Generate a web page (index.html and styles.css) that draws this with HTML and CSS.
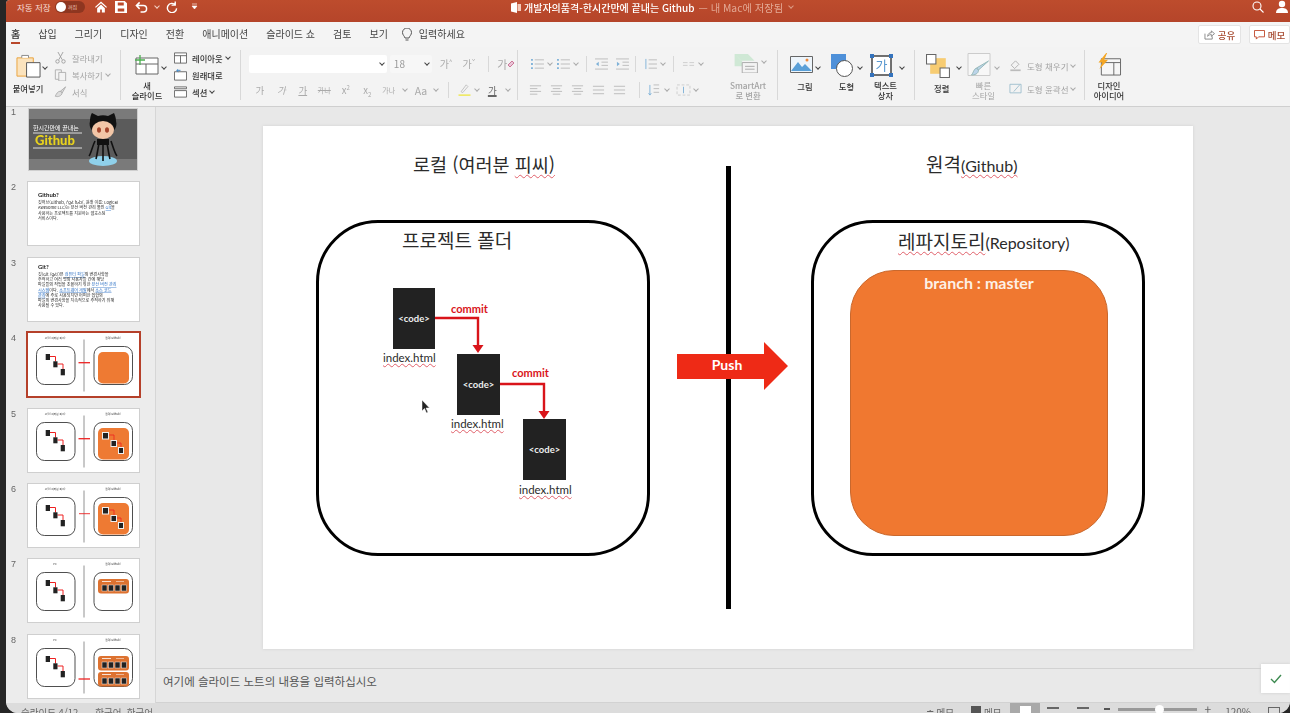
FILE: index.html
```html
<!doctype html>
<html lang="ko">

<head>
	<meta charset="utf-8" />
	<title>개발자의품격-한시간만에 끝내는 Github</title>
	<link rel="stylesheet" href="styles.css">
</head>

<body>

	<svg class="defs" xmlns="http://www.w3.org/2000/svg">
		<symbol id="lines" viewBox="0 0 14 12"><path d="M1 2h12M1 6h12M1 10h12" fill="none" stroke="currentColor"/></symbol>
		<symbol id="linesc" viewBox="0 0 14 12"><path d="M1 1.5h12M3 4.5h8M1 7.5h12M3 10.5h8" fill="none" stroke="currentColor"/></symbol>
		<symbol id="linesl" viewBox="0 0 14 12"><path d="M1 1.5h12M1 4.5h8M1 7.5h12M1 10.5h8" fill="none" stroke="currentColor"/></symbol>
		<symbol id="bullets" viewBox="0 0 16 13"><path d="M5 2h10M5 6.5h10M5 11h10" fill="none" stroke="currentColor"/><path d="M1 1h2v2H1zM1 5.5h2v2H1zM1 10h2v2H1z" fill="#7fb2d8"/></symbol>
		<symbol id="mini" viewBox="0 0 111 63">
			<rect x="8.5" y="13.5" width="38.5" height="38" rx="8" fill="#fff" stroke="#222" stroke-width=".8"/>
			<rect x="66" y="13.5" width="38.5" height="38" rx="8" fill="#fff" stroke="#222" stroke-width=".8"/>
			<path d="M56 6.5v52" stroke="#777" stroke-width=".8"/>
			<path d="M22 23.5h5.500v5M29.5 31h5.500v5" fill="none" stroke="#e22" stroke-width="1"/>
			<rect x="17.7" y="21" width="4.3" height="6" fill="#222"/>
			<rect x="25.3" y="28.3" width="4.2" height="6" fill="#222"/>
			<rect x="32.7" y="36" width="4.2" height="6.3" fill="#222"/>
		</symbol>
		<symbol id="docs-orange" viewBox="0 0 111 63">
			<rect x="70" y="19" width="31" height="31.5" rx="5" fill="#ee7a33"/>
			<path d="M81 26h5v5M89 34h4v4" fill="none" stroke="#e22" stroke-width=".8"/>
			<rect x="74.5" y="23.5" width="6" height="6.5" fill="#222" stroke="#eee"/>
			<rect x="83" y="31.5" width="5.5" height="6" fill="#222" stroke="#eee"/>
			<rect x="90.5" y="38.5" width="5" height="6" fill="#222" stroke="#eee"/>
		</symbol>
		<symbol id="branch-bar" viewBox="0 0 111 15">
			<rect x="70" y="0" width="31" height="14.5" rx="3" fill="#dd7230"/>
			<path d="M74 2.5h9" stroke="#fff" stroke-width=".8"/>
			<path d="M88 2.5h8" stroke="#fff" stroke-width=".5"/>
			<rect x="74" y="6" width="5" height="6" fill="#222" stroke="#eee" stroke-width=".5"/>
			<rect x="80.5" y="6" width="5" height="6" fill="#222" stroke="#eee" stroke-width=".5"/>
			<rect x="87" y="6" width="5" height="6" fill="#222" stroke="#eee" stroke-width=".5"/>
			<rect x="93.5" y="6" width="5" height="6" fill="#222" stroke="#eee" stroke-width=".5"/>
		</symbol>
	</svg>

	<div class="window">

		<!-- title bar -->
		<header class="titlebar">
			<div class="qat">
				<span class="autosave">자동 저장</span>
				<span class="toggle"><i></i><b>꺼짐</b></span>
				<svg class="qat-ic" viewBox="0 0 14 13"><path d="M7 0 0 6.5l1 1L7 2l6 5.500 1-1zM2.5 8v5h3.500V9.500h2V13h3.500V8L7 3.700z" fill="#fff"/></svg>
				<svg class="qat-ic" viewBox="0 0 13 13"><path d="M0 0h10.500L13 2.500V13H0zM3 1.500v3.500h6.500V1.500zM3 8v3.500h7V8z" fill="#fff" fill-rule="evenodd"/></svg>
				<svg class="qat-ic wide" viewBox="0 0 14 12"><path d="M5 1 1.500 4.500 5 8M2 4.500h7a3.500 3.500 0 0 1 0 7H6" fill="none" stroke="#fff" stroke-width="1.600"/></svg>
				<i class="chev light"></i>
				<svg class="qat-ic redo" viewBox="0 0 13 13"><path d="M10 .5v4H6M10 4A5 5 0 1 0 11.500 8" fill="none" stroke="#fff" stroke-width="1.500"/></svg>
				<svg class="qat-ic drop" viewBox="0 0 7 7"><path d="M1 1h5M1 3h5l-2.500 3z" fill="#fff" stroke="#fff" stroke-width=".6"/></svg>
			</div>
			<div class="doc-title">
				<svg class="ppt" viewBox="0 0 10 11"><path d="M0 1.500 6 0v11L0 9.500z" fill="#fff"/><path d="M6.500 2H10v7H6.500z" fill="#f3c9b8"/></svg>
				<span class="doc-name">개발자의품격-한시간만에 끝내는 Github</span>
				<span class="doc-saved">— 내 Mac에 저장됨</span>
				<i class="chev faint"></i>
			</div>
			<div class="win-right">
				<svg class="search" viewBox="0 0 12 12"><circle cx="5" cy="5" r="4" fill="none" stroke="#fff" stroke-width="1.100"/><path d="m8 8 3.500 3.500" stroke="#fff" stroke-width="1.100"/></svg>
				<svg class="person" viewBox="0 0 12 14"><circle cx="6" cy="4" r="3.200" fill="#fff"/><path d="M0 13c0-4 3-5 6-5s6 1 6 5z" fill="#fff"/></svg>
			</div>
		</header>

		<!-- tabs -->
		<nav class="tabs">
			<a class="tab active">홈</a>
			<a class="tab">삽입</a>
			<a class="tab">그리기</a>
			<a class="tab">디자인</a>
			<a class="tab">전환</a>
			<a class="tab">애니메이션</a>
			<a class="tab">슬라이드 쇼</a>
			<a class="tab">검토</a>
			<a class="tab">보기</a>
			<svg class="bulb" viewBox="0 0 10 14"><path d="M3 10C2.500 8 .5 7 .5 4.500a4.500 4.500 0 0 1 9 0C9.500 7 7.500 8 7 10zM3.500 12h3" fill="none" stroke="#555"/></svg>
			<a class="tab search-tab">입력하세요</a>
			<div class="tab-actions">
				<button class="pill share"><svg viewBox="0 0 12 11"><path d="M1 4v6h8V7M4 7c0-3 2-4 4-4V1l3.500 3L8 7V5C6.500 5 5 5.500 4 7z" fill="none" stroke="#777" stroke-width=".9"/></svg>공유</button>
				<button class="pill memo"><svg viewBox="0 0 12 11"><path d="M.5.500h11v7H5L2.500 10V7.500h-2z" fill="none" stroke="#c0492c"/></svg>메모</button>
			</div>
		</nav>

		<!-- ribbon -->
		<section class="ribbon">

			<div class="group g-clip">
				<div class="big w-paste">
					<svg class="ic-26" viewBox="0 0 26 26"><path d="M1 4h17v19H1z" fill="#fbe3bd" stroke="#e9a23b"/><path d="M6 4V1.500h7V4" fill="#fff" stroke="#888"/><path d="M11 9h14v15H11z" fill="#fff" stroke="#555"/></svg>
					<span class="label">붙여넣기</span>
				</div>
				<i class="chev first"></i>
				<div class="list off">
					<div class="li"><svg class="ic-14" viewBox="0 0 14 14"><path d="M4 0l5 9M10 0 5 9" stroke="#999" fill="none"/><circle cx="3.500" cy="11" r="2" fill="none" stroke="#999"/><circle cx="10.500" cy="11" r="2" fill="none" stroke="#999"/></svg>잘라내기</div>
					<div class="li"><svg class="ic-14" viewBox="0 0 14 14"><path d="M1 1h7v11H1z" fill="none" stroke="#aaa"/><path d="M5 4h8v10H5z" fill="#f3f3f3" stroke="#aaa"/></svg>복사하기 <i class="chev faint2"></i></div>
					<div class="li"><svg class="ic-14" viewBox="0 0 14 14"><path d="M13 1 7 6 9 8zM7 6c-3 0-5 3-6 6 3 1 7 0 8-4z" fill="#ddd" stroke="#aaa"/></svg>서식</div>
				</div>
			</div>

			<div class="group g-slides">
				<div class="big w-new">
					<svg class="ic-new" viewBox="0 0 24 20"><path d="M1 3h22v16H1zM1 9h22M11 9v10" fill="#fff" stroke="#666"/><path d="M5 0v10M0 5h10" stroke="#4caf50" stroke-width="1.300"/></svg>
					<span class="label">새<br>슬라이드</span>
				</div>
				<i class="chev"></i>
				<div class="list">
					<div class="li"><svg class="ic-14" viewBox="0 0 14 12"><path d="M.5.500h13v11H.5zM.5 3.500h13M7 3.500v8" fill="#fff" stroke="#666"/></svg>레이아웃 <i class="chev"></i></div>
					<div class="li"><svg class="ic-14" viewBox="0 0 14 12"><path d="M.5 2.500h13v9H.5z" fill="#fff" stroke="#666"/><path d="M7 1H3M4.500 0 3 1l1.500 2" stroke="#3d85c6" fill="none"/></svg>원래대로</div>
					<div class="li"><svg class="ic-14" viewBox="0 0 14 12"><path d="M.5.500h13v2H.5zM.5 4.500h13v7H.5z" fill="#fff" stroke="#666"/></svg>섹션 <i class="chev"></i></div>
				</div>
			</div>

			<div class="group g-font">
				<div class="row row-a">
					<div class="field f-name"><i class="chev"></i></div>
					<div class="field f-size">18<i class="chev"></i></div>
					<span class="cell off-t up">가<sup>^</sup></span>
					<span class="cell off-t up">가<sup>ˇ</sup></span>
					<span class="vsep"></span>
					<span class="cell off-t erase">가<svg viewBox="0 0 8 8"><path d="m1 5 4-4 2 2-4 4z" fill="#e9c6d8" stroke="#c79"/></svg></span>
				</div>
				<div class="row row-b off-t">
					<span class="cell">가</span>
					<span class="cell ital">가</span>
					<span class="cell under">가</span>
					<span class="cell strike">가나</span>
					<span class="cell">x<sup>2</sup></span>
					<span class="cell">x<sub>2</sub></span>
					<span class="cell tiny">가나</span>
					<i class="chev"></i>
					<span class="cell aa">Aa</span>
					<i class="chev"></i>
					<span class="vsep"></span>
					<svg class="ic-16 hl" viewBox="0 0 16 14"><path d="m4 9 6-8 2 2-6 7z" fill="none" stroke="#bbb"/><path d="M1 12h14v2H1z" fill="#efe96a"/></svg>
					<i class="chev"></i>
					<span class="cell color">가</span>
					<i class="chev"></i>
				</div>
			</div>

			<div class="group g-para">
				<div class="para-main">
					<div class="row row-a">
						<svg class="ic-16" viewBox="0 0 16 13"><use href="#bullets"/></svg><i class="chev"></i>
						<svg class="ic-16" viewBox="0 0 16 13"><use href="#bullets"/></svg><i class="chev"></i>
						<span class="vsep"></span>
						<svg class="ic-16" viewBox="0 0 16 13"><path d="M1 1h14M8 4.500h7M8 8h7M1 12h14" stroke="#bbb" fill="none"/><path d="M5 4 2 6.500 5 9z" fill="#7fb2d8"/></svg>
						<svg class="ic-16" viewBox="0 0 16 13"><path d="M1 1h14M8 4.500h7M8 8h7M1 12h14" stroke="#bbb" fill="none"/><path d="M2 4l3 2.500L2 9z" fill="#7fb2d8"/></svg>
						<span class="vsep"></span>
						<svg class="ic-16" viewBox="0 0 16 13"><path d="M6 2h9M6 6.500h9M6 11h9" stroke="#bbb" fill="none"/><path d="M3 1v11" stroke="#7fb2d8"/></svg><i class="chev"></i>
						<span class="vsep"></span>
						<svg class="ic-16" viewBox="0 0 16 13"><path d="M2 5h5M2 8h5M9 5h5M9 8h5" stroke="#ccc" fill="none"/></svg><i class="chev"></i>
					</div>
					<div class="row row-b">
						<svg class="ic-14 al" viewBox="0 0 14 12"><use href="#linesl"/></svg>
						<svg class="ic-14 al" viewBox="0 0 14 12"><use href="#linesc"/></svg>
						<svg class="ic-14 al" viewBox="0 0 14 12"><use href="#linesc"/></svg>
						<svg class="ic-14 al" viewBox="0 0 14 12"><use href="#lines"/></svg>
						<svg class="ic-14 al" viewBox="0 0 14 12"><use href="#lines"/></svg>
						<span class="vsep"></span>
						<svg class="ic-16" viewBox="0 0 16 13"><path d="M3 1v11M1.500 10 3 12l1.500-2" stroke="#7fb2d8" fill="none"/><path d="M7 1h6M7 5h6M13 9H7" stroke="#bbb" fill="none"/></svg><i class="chev"></i>
						<svg class="ic-16 gap-l" viewBox="0 0 16 13"><path d="M1 1h14v11H1z" fill="none" stroke="#ccc" stroke-dasharray="3 2"/><path d="M8 3v7" stroke="#7fb2d8"/></svg><i class="chev"></i>
					</div>
				</div>
				<div class="big w-smart off">
					<svg class="ic-smart" viewBox="0 0 25 20"><path d="M0 0h14l7 7H7zM0 13h8V8L0 0z" fill="#cfe8d5"/><path d="M8 9h16v11H8z" fill="#f3f3f3" stroke="#aaa"/><path d="M11 13h10M11 16h10" stroke="#aaa"/></svg>
					<i class="chev abs-chev"></i>
					<span class="label">SmartArt<br>로 변환</span>
				</div>
			</div>

			<div class="group g-insert">
				<div class="big w-pic">
					<svg class="ic-pic" viewBox="0 0 23 17"><path d="M.5.500h22v16H.5z" fill="#eef5fb" stroke="#666"/><path d="M1 15 8 6l4 5 3-3 7 7z" fill="#5aa0d8"/><circle cx="17" cy="4" r="1.500" fill="#ef8a3c"/></svg>
					<span class="label">그림</span>
				</div>
				<i class="chev mid"></i>
				<div class="big w-shape">
					<svg class="ic-shape" viewBox="0 0 25 25"><path d="M1 1h15v15H1z" fill="#4e90d9"/><circle cx="14.500" cy="15.500" r="8" fill="#fff" stroke="#555"/></svg>
					<span class="label">도형</span>
				</div>
				<i class="chev mid"></i>
				<div class="big w-text">
					<svg class="ic-textbox" viewBox="0 0 25 25"><path d="M3 3h19v19H3z" fill="#fff" stroke="#444" stroke-width="1.500"/><path d="M1 1h4v4H1zM20 1h4v4h-4zM1 20h4v4H1zM20 20h4v4h-4z" fill="#3473bd"/><text x="12.500" y="17" text-anchor="middle" class="tb-glyph">가</text></svg>
					<span class="label">텍스트<br>상자</span>
				</div>
				<i class="chev mid"></i>
			</div>

			<div class="group g-draw">
				<div class="big w-arrange">
					<svg class="ic-26" viewBox="0 0 24 24"><path d="M4 4h15v15H4z" fill="#f7cc72"/><path d="M.5.500h9v9h-9zM13.500 13.500h9v9h-9z" fill="#fff" stroke="#666"/></svg>
					<span class="label">정렬</span>
				</div>
				<i class="chev mid"></i>
				<div class="big w-quick off">
					<svg class="ic-26" viewBox="0 0 24 24"><path d="M.5.500h22v22H.500z" fill="#f7f7f7" stroke="#ccc"/><path d="m21 8-10 9-2-2zM9 15c-3 1-3 5-5 7 3 0 7-1 7-5z" fill="#bcd4ea" stroke="#9bb"/></svg>
					<span class="label">빠른<br>스타일</span>
				</div>
				<i class="chev mid faint2"></i>
				<div class="list off wide-list">
					<div class="li"><svg class="ic-14" viewBox="0 0 14 14"><path d="m2 6 5-5 4 4-5 5z" fill="none" stroke="#aaa"/><path d="M1 12h12" stroke="#bbb" stroke-width="2"/></svg>도형 채우기 <i class="chev faint2"></i></div>
					<div class="li"><svg class="ic-14" viewBox="0 0 14 14"><path d="M.5 1.500h13v10H.5z" fill="none" stroke="#9bc"/><path d="m5 10 7-8" stroke="#9bc"/></svg>도형 윤곽선 <i class="chev faint2"></i></div>
				</div>
			</div>

			<div class="group g-idea">
				<div class="big w-idea">
					<svg class="ic-idea" viewBox="0 0 25 24"><path d="M4 6h20v17H4zM4 10h20M17 10v13" fill="#f6f6f6" stroke="#666"/><path d="M9 0 1 10h4l-3 7 9-10H7l3-7z" fill="#f5a623"/></svg>
					<span class="label">디자인<br>아이디어</span>
				</div>
			</div>
		</section>

		<!-- thumbnails + editor -->
		<main class="workspace">
			<aside class="rail">

				<div class="thumb-row">
					<span class="num">1</span>
					<svg class="thumb cover" viewBox="0 0 108 61">
						<path d="M0 0h108v61H0z" fill="#7a7a7a"/>
						<path d="M0 10h108v40H0z" fill="#5b5b5b"/>
						<text x="4" y="20.5" class="cover-top">한시간만에 끝내는</text>
						<path d="M4 24h49M4 39h49" stroke="#ddd"/>
						<text x="6" y="36" class="cover-git">Github</text>
						<ellipse cx="74" cy="52" rx="14" ry="5" fill="#8fd0ea"/>
						<path d="M66 32c-3 6-4 13-6 15M70 34c-1 6-2 12-3 16M74 34v18M78 34c1 6 2 12 3 16M82 32c2 6 4 13 6 15" fill="none" stroke="#111" stroke-width="1.6"/>
						<path d="M61 12c0-3 1-7 2-8l6 3c3-1 7-1 10 0l6-3c1 2 2 5 2 8 2 7-3 13-13 13s-15-6-13-13z" fill="#111"/>
						<ellipse cx="74" cy="21" rx="11" ry="9" fill="#f2c6a7"/>
						<ellipse cx="70" cy="21" rx="2" ry="2.8" fill="#a4452c"/>
						<ellipse cx="78" cy="21" rx="2" ry="2.8" fill="#a4452c"/>
						<path d="M68 30h12v6H68z" fill="#111"/>
					</svg>
				</div>

				<div class="thumb-row">
					<span class="num">2</span>
					<svg class="thumb" viewBox="0 0 111 63">
						<text x="10" y="15" class="t-h">Github?</text>
						<text x="10" y="22" class="t-p">깃허브(Github, /ˈɡɪt hʌb/, 원래 이름: Logical</text>
						<text x="10" y="27.2" class="t-p">Awesome LLC)는 분산 버전 관리 툴인 <tspan class="t-link">Git</tspan>을</text>
						<text x="10" y="32.5" class="t-p">사용하는 프로젝트를 지원하는 웹호스팅</text>
						<text x="10" y="37.8" class="t-p">서비스이다.</text>
					</svg>
				</div>

				<div class="thumb-row">
					<span class="num">3</span>
					<svg class="thumb" viewBox="0 0 111 63">
						<text x="10" y="11" class="t-h">Git?</text>
						<text x="10" y="18" class="t-p">깃(Git /ɡɪt/)은 <tspan class="t-link">컴퓨터 파일</tspan>의 변경사항을</text>
						<text x="10" y="23.2" class="t-p">추적하고 여러 명의 사용자들 간에 해당</text>
						<text x="10" y="28.4" class="t-p">파일들의 작업을 조율하기 위한 <tspan class="t-link">분산 버전 관리</tspan></text>
						<text x="10" y="33.6" class="t-p"><tspan class="t-link">시스템</tspan>이다. <tspan class="t-link">소프트웨어 개발</tspan>에서 <tspan class="t-link">소스 코드</tspan></text>
						<text x="10" y="38.8" class="t-p"><tspan class="t-link">관리</tspan>에 주로 사용되지만 어떠한 집합의</text>
						<text x="10" y="44" class="t-p">파일의 변경사항을 지속적으로 추적하기 위해</text>
						<text x="10" y="49.2" class="t-p">사용될 수 있다.</text>
					</svg>
				</div>

				<div class="thumb-row">
					<span class="num">4</span>
					<svg class="thumb selected" viewBox="0 0 111 63">
						<use href="#mini"/>
						<text x="27" y="5.5" class="t-mini">로컬 (여러분 피씨)</text>
						<text x="85" y="5.5" class="t-mini">원격(Github)</text>
						<rect x="70" y="19" width="31" height="31.5" rx="5" fill="#ee7a33"/>
						<path d="M50.5 29.7h11.5" stroke="#e22" stroke-width="1.3"/>
					</svg>
				</div>

				<div class="thumb-row">
					<span class="num">5</span>
					<svg class="thumb" viewBox="0 0 111 63">
						<use href="#mini"/><use href="#docs-orange"/>
						<text x="27" y="5.5" class="t-mini">로컬 (여러분 피씨)</text>
						<text x="85" y="5.5" class="t-mini">원격(Github)</text>
						<path d="M50.5 29.7h11.5" stroke="#e22" stroke-width="1.3"/>
					</svg>
				</div>

				<div class="thumb-row">
					<span class="num">6</span>
					<svg class="thumb" viewBox="0 0 111 63">
						<use href="#mini"/><use href="#docs-orange"/>
						<text x="27" y="5.5" class="t-mini">로컬 (여러분 피씨)</text>
						<text x="85" y="5.5" class="t-mini">원격(Github)</text>
						<path d="M51 29.7h11" stroke="#e22" stroke-width=".9"/>
					</svg>
				</div>

				<div class="thumb-row">
					<span class="num">7</span>
					<svg class="thumb" viewBox="0 0 111 63">
						<use href="#mini"/>
						<text x="27" y="5.5" class="t-mini">PC</text>
						<text x="85" y="5.5" class="t-mini">원격(Github)</text>
						<svg x="0" y="20" width="111" height="15" viewBox="0 0 111 15"><use href="#branch-bar"/></svg>
					</svg>
				</div>

				<div class="thumb-row">
					<span class="num">8</span>
					<svg class="thumb" viewBox="0 0 111 63">
						<use href="#mini"/>
						<text x="27" y="5.5" class="t-mini">PC</text>
						<text x="85" y="5.5" class="t-mini">원격(Github)</text>
						<svg x="0" y="21" width="111" height="15" viewBox="0 0 111 15"><use href="#branch-bar"/></svg>
						<svg x="0" y="37" width="111" height="15" viewBox="0 0 111 15"><use href="#branch-bar"/></svg>
						<path d="M50.5 44h11.5" stroke="#e22" stroke-width="1.3"/>
					</svg>
				</div>

			</aside>

			<div class="editor">
				<div class="canvas">
					<div class="slide">

						<div class="s-title t-left">로컬 (여러분 <span class="typo">피씨)</span></div>
						<div class="s-title t-right">원격<span class="lat"><span class="typo">(Github)</span></span></div>
						<div class="divider"></div>

						<div class="box b-left"></div>
						<div class="box b-right"></div>
						<div class="s-title folder">프로젝트 폴더</div>
						<div class="s-title repo"><span class="typo">레파지토리</span><span class="lat">(Repository)</span></div>

						<div class="branch">branch : master</div>

						<div class="doc d1">&lt;code&gt;</div>
						<div class="doc d2">&lt;code&gt;</div>
						<div class="doc d3">&lt;code&gt;</div>
						<div class="file f1"><span class="typo">index.html</span></div>
						<div class="file f2"><span class="typo">index.html</span></div>
						<div class="file f3"><span class="typo">index.html</span></div>
						<div class="commit c1">commit</div>
						<div class="commit c2">commit</div>

						<svg class="links" viewBox="0 0 930 523">
							<path d="M172 192h43v28M237 258h44v28" fill="none" stroke="#d9141a" stroke-width="2.4"/>
							<path d="m209.500 219 5.500 8 5.500-8zM275.500 285l5.500 8 5.500-8z" fill="#d9141a"/>
						</svg>

						<div class="push">
							<svg viewBox="0 0 111 48"><path d="M0 12h87V0l24 24-24 24V37H0z" fill="#ee2a16"/></svg>
							<span>Push</span>
						</div>

						<svg class="cursor" viewBox="0 0 10 14"><path d="M1 0v11l2.500-2.500L5.500 13l1.500-.7-2-4.300H8.500z" fill="#222" stroke="#fff" stroke-width=".5"/></svg>
					</div>
				</div>
				<div class="notes">여기에 슬라이드 노트의 내용을 입력하십시오</div>
			</div>

			<button class="check"><svg viewBox="0 0 12 10"><path d="m1 5 3.500 3.500L11 1" fill="none" stroke="#3d8a50" stroke-width="1.400"/></svg></button>
		</main>

		<!-- status bar -->
		<footer class="status">
			<span class="st-a">슬라이드 4/12</span>
			<span class="st-b">한국어, 한국어</span>
			<div class="st-right">
				<span class="st-item">≐ 메모</span>
				<span class="st-item"><i class="sq"></i>메모</span>
				<span class="view-on"><i></i></span>
				<span class="view v2"></span>
				<span class="view v3"></span>
				<span class="zoom-minus"></span>
				<span class="zoom-track"><i></i></span>
				<span class="zoom-plus">+</span>
				<span class="zoom-val">120%</span>
				<span class="view v4"></span>
			</div>
		</footer>
	</div>

</body>

</html>
```

FILE: styles.css
```css
* {
	box-sizing: border-box;
}

html,
body {
	margin: 0;
	height: 100%;
	overflow: hidden;
	background: #262626;
}

body {
	font-family: "Noto Sans CJK KR", "Noto Sans", sans-serif;
	color: #333;
}

.defs {
	display: none;
}

.window {
	margin-left: 6px;
	height: 713px;
	display: flex;
	flex-direction: column;
	background: #e8e8e8;
	border-radius: 4px 0 12px 12px;
	overflow: hidden;
	position: relative;
	filter: blur(.5px);
}

/* title bar */
.titlebar {
	height: 22px;
	flex: none;
	display: flex;
	align-items: flex-start;
	background: linear-gradient(#bd4c2d, #b5452a);
	color: #fff;
	font-size: 9px;
}

.qat {
	width: 505px;
	display: flex;
	align-items: center;
	height: 13px;
	padding-left: 11px;
}

.autosave {
	width: 38px;
	font-size: 8.5px;
	color: #f7ded6;
}

.toggle {
	width: 30px;
	height: 12px;
	border-radius: 6px;
	background: #8e3620;
	display: flex;
	align-items: center;
	padding-left: 1px;
	margin-right: 10px;
}

.toggle i {
	width: 10px;
	height: 10px;
	border-radius: 50%;
	background: #fff;
}

.toggle b {
	font-size: 5px;
	font-weight: 400;
	margin-left: 2px;
	color: #f0c8bb;
}

.qat-ic {
	width: 12px;
	height: 12px;
	margin-right: 8px;
}

.qat-ic.wide {
	width: 13px;
	margin-right: 4px;
}

.qat-ic.redo {
	margin: 0 13px 0 7px;
}

.qat-ic.drop {
	width: 7px;
	height: 7px;
}

.doc-title {
	display: flex;
	align-items: center;
	height: 14px;
	font-size: 10px;
	white-space: nowrap;
}

.ppt {
	width: 10px;
	height: 11px;
	margin-right: 3px;
}

.doc-name {
	font-weight: 500;
	margin-right: 4px;
}

.doc-saved {
	color: #e3a995;
	font-size: 10.3px;
}

.win-right {
	margin-left: auto;
	display: flex;
	align-items: center;
	padding-right: 2px;
}

.search {
	width: 12px;
	height: 12px;
	margin-right: 12px;
}

.person {
	width: 12px;
	height: 14px;
}

/* chevrons */
.chev {
	display: inline-block;
	flex: none;
	width: 4px;
	height: 4px;
	margin: 0 3px 2px;
	border-right: 1px solid #444;
	border-bottom: 1px solid #444;
	transform: rotate(45deg);
}

.chev.light {
	border-color: #f3d2c7;
	margin-right: 0;
}

.chev.faint {
	border-color: #dc9c86;
	margin-left: 6px;
}

.chev.faint2,
.off-t .chev,
.g-para .chev {
	border-color: #aaa;
}

/* tabs */
.tabs {
	height: 25px;
	flex: none;
	display: flex;
	align-items: center;
	gap: 18px;
	padding-left: 5px;
	background: #f4f4f4;
	font-size: 10px;
	color: #444;
}

.tab {
	height: 25px;
	line-height: 24px;
	white-space: nowrap;
	position: relative;
}

.tab.active {
	color: #333;
	font-weight: 500;
}

.tab.active::after {
	content: "";
	position: absolute;
	left: 0;
	right: 0;
	bottom: 3px;
	height: 2px;
	background: #b8472a;
}

.bulb {
	width: 10px;
	height: 14px;
	margin-left: -4px;
}

.search-tab {
	margin-left: -11px;
}

.tab-actions {
	margin-left: auto;
	display: flex;
	gap: 8px;
}

.pill {
	height: 19px;
	width: 43px;
	padding: 0;
	display: flex;
	align-items: center;
	justify-content: center;
	gap: 3px;
	background: #fff;
	border: 1px solid #e4e4e4;
	border-radius: 2px;
	font: 500 9.5px "Noto Sans CJK KR", sans-serif;
	color: #a6492f;
}

.pill.memo {
	width: 41px;
}

.pill svg {
	width: 11px;
	height: 10px;
}

/* ribbon */
.ribbon {
	height: 60px;
	flex: none;
	display: flex;
	padding-top: 3px;
	background: #f3f3f3;
	border-bottom: 1px solid #cfcfcf;
	box-shadow: 0 1px 1px #ddd;
}

.group {
	height: 50px;
	display: flex;
	flex: none;
	border-right: 1px solid #d8d8d8;
}

.big {
	display: flex;
	flex-direction: column;
	align-items: center;
	flex: none;
	position: relative;
}

.label {
	font-size: 8.3px;
	font-weight: 500;
	line-height: 10px;
	text-align: center;
	color: #333;
	white-space: nowrap;
}

.off .label,
.off .li {
	color: #a3a3a3;
	font-weight: 400;
}

.list {
	display: flex;
	flex-direction: column;
}

.li {
	height: 17.5px;
	display: flex;
	align-items: center;
	font-size: 8.3px;
	font-weight: 500;
	color: #333;
	white-space: nowrap;
}

.ic-14 {
	width: 13px;
	height: 12px;
	margin-right: 5px;
	flex: none;
}

.ic-16 {
	width: 15px;
	height: 12px;
	flex: none;
	color: #bbb;
}

.ic-26 {
	width: 25px;
	height: 25px;
	margin-bottom: 3px;
}

.g-clip {
	width: 115px;
	padding-left: 7px;
}

.w-paste {
	width: 30px;
	padding-top: 4px;
}

.w-paste .ic-26 {
	margin-bottom: 4px;
}

.chev.first {
	margin: 15px 3px 0 0;
}

.g-clip .list {
	margin-left: 4px;
}

.g-slides {
	width: 120px;
	padding-left: 11px;
}

.w-new {
	width: 30px;
	padding-top: 5px;
}

.ic-new {
	width: 24px;
	height: 20px;
	margin-bottom: 5px;
}

.g-slides > .chev {
	margin: 15px 5px 0 0;
}

.g-slides .list {
	margin-left: 3px;
}

.g-slides .ic-14 {
	margin-right: 5px;
}

.g-font {
	width: 277px;
	padding-left: 8px;
	display: block;
}

.row {
	display: flex;
	align-items: center;
	white-space: nowrap;
}

.row-a {
	height: 26px;
	padding-top: 1px;
}

.row-b {
	height: 24px;
	margin-top: 2px;
}

.field {
	height: 18px;
	background: #fff;
	border-radius: 2px;
	display: flex;
	align-items: center;
	justify-content: flex-end;
	font-size: 10px;
	color: #999;
}

.f-name {
	width: 139px;
	margin-right: 3px;
}

.f-size {
	width: 42px;
	justify-content: space-between;
	padding-left: 4px;
	background: #f7f7f7;
	margin-right: 3px;
}

.cell {
	width: 21.5px;
	text-align: center;
	font-size: 9.5px;
	flex: none;
}

.off-t {
	color: #aaa;
}

.cell sup,
.cell sub {
	font-size: 6px;
	line-height: 0;
}

.cell.up {
	width: 23px;
	font-size: 10px;
}

.erase {
	display: flex;
	align-items: center;
	justify-content: center;
	font-size: 11px;
}

.erase svg {
	width: 8px;
	height: 8px;
}

.vsep {
	width: 1px;
	height: 16px;
	background: #d8d8d8;
	margin: 0 7px;
	flex: none;
}

.ital {
	font-style: italic;
}

.under {
	text-decoration: underline;
}

.strike {
	font-size: 7px;
	text-decoration: line-through;
}

.tiny {
	font-size: 7px;
}

.aa {
	font-size: 10.5px;
	margin-left: 2px;
	width: 19px;
}

.hl {
	margin-left: 1px;
}

.color {
	text-decoration: underline;
	text-decoration-thickness: 2px;
	color: #666;
}

.g-para {
	width: 260px;
	padding-left: 11px;
}

.para-main {
	width: 206px;
}

.g-para .ic-16 {
	margin-left: 1px;
}

.g-para .row-a .ic-16 + .ic-16 {
	margin-left: 6px;
}

.g-para .vsep {
	margin: 0 6px 0 5px;
}

.al {
	color: #bbb;
	margin-right: 8px;
}

.g-para .gap-l {
	margin-left: 4px;
}

.w-smart {
	width: 40px;
	padding-top: 4px;
	margin-left: -4px;
}

.w-smart .label {
	margin-right: 6px;
	font-weight: 500;
}

.ic-smart {
	width: 25px;
	height: 20px;
	margin: 0 10px 7px 0;
}

.abs-chev {
	position: absolute;
	right: 2px;
	top: 9px;
	border-color: #aaa;
}

.g-insert {
	width: 137px;
	padding-left: 11px;
}

.w-pic {
	width: 24px;
	padding-top: 6px;
}

.ic-pic {
	width: 23px;
	height: 17px;
	margin-bottom: 8px;
}

.w-pic .label,
.w-shape .label,
.w-text .label,
.w-arrange .label,
.w-quick .label {
	margin-left: 8px;
}

.chev.mid {
	margin: 15px 5px 0 3px;
}

.w-shape {
	width: 25px;
	padding-top: 3px;
	margin-left: 5px;
}

.ic-shape {
	width: 25px;
	height: 25px;
	margin-bottom: 3px;
}

.w-text {
	width: 27px;
	padding-top: 3px;
	margin-left: 1px;
}

.ic-textbox {
	width: 25px;
	height: 25px;
	margin-bottom: 2px;
}

.g-insert > .chev:last-child {
	margin-left: 5px;
}

.tb-glyph {
	font-size: 13px;
	fill: #5a98d0;
}

.g-draw {
	width: 170px;
	padding-left: 11px;
}

.w-arrange {
	width: 28px;
	padding-top: 4px;
	align-items: flex-start;
}

.w-arrange .label {
	margin-left: 8px;
}

.w-arrange .ic-26 {
	margin-bottom: 4px;
}

.w-quick {
	width: 25px;
	padding-top: 3px;
	margin-left: 1px;
}

.wide-list {
	margin-left: 5px;
	padding-top: 4px;
}

.wide-list .li {
	height: 26px;
	font-size: 8.5px;
}

.g-idea {
	border-right: 0;
	padding-left: 7px;
}

.w-idea {
	width: 34px;
	padding-top: 3px;
}

.ic-idea {
	width: 25px;
	height: 24px;
	margin-bottom: 4px;
}

/* thumbnails + editor */
.workspace {
	flex: 1;
	min-height: 0;
	display: flex;
	position: relative;
}

.rail {
	width: 150px;
	flex: none;
	background: #ececec;
	border-right: 1px solid #d6d6d6;
	overflow: hidden;
}

.thumb-row {
	height: 75.4px;
	display: flex;
	padding-left: 5px;
}

.num {
	width: 17px;
	font-size: 9px;
	line-height: 11px;
	color: #666;
	font-family: "Liberation Sans", sans-serif;
}

.thumb {
	width: 111px;
	height: 63px;
	background: #fff;
	outline: 1px solid #cfcfcf;
}

.thumb.cover {
	margin: 2px 0 0 1px;
	width: 108px;
	height: 61px;
}

.thumb.selected {
	outline: 2.5px solid #b5402a;
}

.cover-top {
	font-size: 6px;
	fill: #fff;
}

.cover-git {
	font: 900 13px "Lato", sans-serif;
	fill: #e8d21d;
}

.t-h {
	font: 700 6px "Lato", "Noto Sans CJK KR", sans-serif;
	fill: #222;
}

.t-p {
	font-size: 4.1px;
	fill: #222;
}

.t-link {
	fill: #2a6fc4;
	text-decoration: underline;
}

.t-mini {
	font-size: 2.7px;
	fill: #333;
	text-anchor: middle;
}

.editor {
	flex: 1;
	min-width: 0;
	display: flex;
	flex-direction: column;
}

.canvas {
	flex: 1;
	padding: 19px 0 0 107px;
	background: #e8e8e8;
	overflow: hidden;
}

.slide {
	width: 930px;
	height: 523px;
	background: #fff;
	position: relative;
	box-shadow: 0 0 3px #d0d0d0;
}

/* slide content */
.s-title {
	position: absolute;
	font-size: 19px;
	line-height: 20px;
	white-space: nowrap;
	color: #2b2b2b;
}

.lat {
	font-family: "Lato", sans-serif;
	font-size: 16px;
}

.typo {
	text-decoration: underline wavy #e0606a 1px;
	text-underline-offset: 2px;
}

.t-left {
	left: 150px;
	top: 28px;
	font-size: 18.5px;
}

.t-right {
	left: 663px;
	top: 28px;
}

.folder {
	left: 139px;
	top: 104px;
}

.repo {
	left: 635px;
	top: 105px;
}

.divider {
	position: absolute;
	left: 463px;
	top: 40px;
	width: 5px;
	height: 443px;
	background: #000;
}

.box {
	position: absolute;
	top: 94px;
	width: 334px;
	height: 336px;
	border: 3.5px solid #000;
	border-radius: 62px;
}

.b-left {
	left: 53px;
}

.b-right {
	left: 548px;
}

.branch {
	position: absolute;
	left: 587px;
	top: 144px;
	width: 258px;
	height: 266px;
	padding-top: 2px;
	background: #f07830;
	border: 1px solid #c9682d;
	border-radius: 44px;
	text-align: center;
	font: 700 16px/20px "Lato", sans-serif;
	color: #fdf0e6;
}

.doc {
	position: absolute;
	width: 43px;
	height: 61px;
	background: #222;
	color: #eee;
	font: 700 9.5px/61px "Lato", sans-serif;
	text-align: center;
}

.d1 {
	left: 130px;
	top: 162px;
	width: 42px;
}

.d2 {
	left: 194px;
	top: 228px;
}

.d3 {
	left: 260px;
	top: 293px;
}

.file {
	position: absolute;
	font: 400 11.5px/14px "Lato", sans-serif;
	color: #2b2b2b;
}

.file .typo {
	text-underline-offset: 1px;
}

.f1 {
	left: 120px;
	top: 225px;
}

.f2 {
	left: 188px;
	top: 291px;
}

.f3 {
	left: 256px;
	top: 357px;
}

.commit {
	position: absolute;
	font: 700 11px/12px "Lato", sans-serif;
	color: #d9141a;
}

.c1 {
	left: 188px;
	top: 177px;
}

.c2 {
	left: 249px;
	top: 241px;
}

.links {
	position: absolute;
	left: 0;
	top: 0;
	width: 930px;
	height: 523px;
	pointer-events: none;
}

.push {
	position: absolute;
	left: 414px;
	top: 216px;
	width: 111px;
	height: 48px;
}

.push svg {
	width: 111px;
	height: 48px;
	display: block;
}

.push span {
	position: absolute;
	left: 0;
	width: 100px;
	top: 13px;
	text-align: center;
	font: 700 14px/20px "Lato", sans-serif;
	color: #fff;
}

.cursor {
	position: absolute;
	left: 158px;
	top: 274px;
	width: 10px;
	height: 14px;
}

.notes {
	height: 35px;
	flex: none;
	padding: 5px 0 0 7px;
	background: #e9e9e9;
	border-top: 1px solid #d2d2d2;
	border-bottom: 1px solid #d2d2d2;
	font-size: 11.5px;
	line-height: 14px;
	color: #555;
}

.check {
	position: absolute;
	right: 0;
	top: 557px;
	width: 29px;
	height: 29px;
	padding: 0;
	background: #fff;
	border: 0;
	box-shadow: 0 0 3px #ccc;
	display: flex;
	align-items: center;
	justify-content: center;
}

.check svg {
	width: 12px;
	height: 10px;
}

/* status bar */
.status {
	height: 10px;
	flex: none;
	display: flex;
	background: #dcdcdc;
	font-size: 9.5px;
	line-height: 12px;
	color: #666;
	white-space: nowrap;
	overflow: hidden;
}

.st-a {
	margin: 3px 0 0 15px;
}

.st-b {
	margin: 3px 0 0 17px;
}

.st-right {
	margin-left: auto;
	display: flex;
	height: 10px;
}

.st-item {
	margin: 3px 17px 0 0;
	display: flex;
}

.sq {
	width: 10px;
	height: 10px;
	background: #555;
	margin-right: 3px;
}

.view-on {
	width: 30px;
	background: #a9a9a9;
	display: flex;
	justify-content: center;
	padding-top: 3px;
	margin: 0 7px 0 -8px;
}

.view-on i {
	width: 11px;
	height: 10px;
	background: #fff;
}

.view {
	width: 12px;
	height: 6px;
	margin-top: 4px;
	border-top: 2px solid #666;
}

.v2 {
	margin-right: 18px;
}

.v3 {
	margin-right: 15px;
}

.zoom-minus {
	width: 6px;
	height: 2px;
	margin: 5px 8px 0 0;
	background: #555;
}

.zoom-track {
	width: 79px;
	height: 3px;
	margin-top: 5px;
	background: #999;
	position: relative;
}

.zoom-track i {
	position: absolute;
	left: 37px;
	top: -3px;
	width: 9px;
	height: 9px;
	border-radius: 50%;
	background: #fff;
}

.zoom-plus {
	margin: 0 14px 0 7px;
	font-size: 12px;
	line-height: 12px;
}

.zoom-val {
	margin: 3px 17px 0 0;
	font-size: 10px;
}

.v4 {
	margin-right: 10px;
	border: 1px solid #666;
	height: 8px;
}
```
